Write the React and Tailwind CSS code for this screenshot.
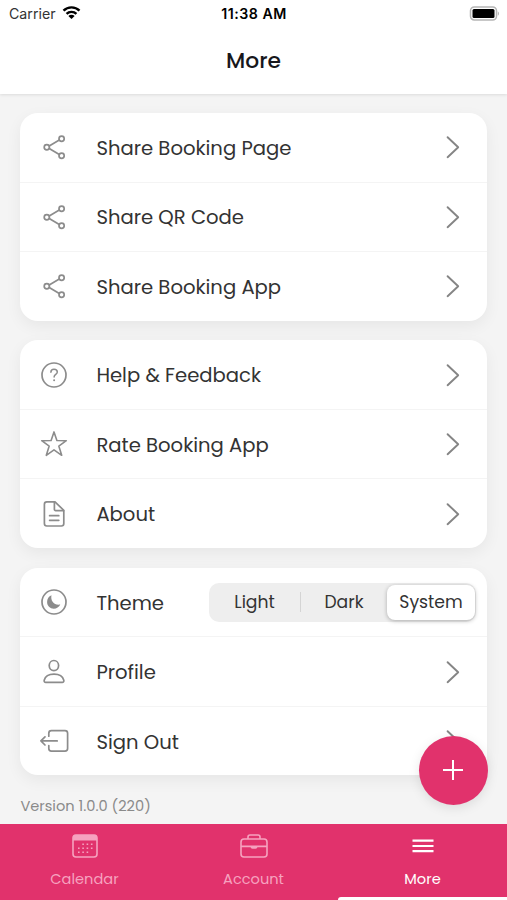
import React, { useState } from "react";
import clsx from "clsx";

const Icon = ({ children, className = "w-7 h-7" }) => (
  <svg
    viewBox="0 0 28 28"
    fill="none"
    stroke="currentColor"
    strokeWidth="1.7"
    strokeLinecap="round"
    strokeLinejoin="round"
    className={className}
  >
    {children}
  </svg>
);

const ShareIcon = () => (
  <Icon>
    <circle cx="21.6" cy="5.8" r="2.6" />
    <circle cx="6.8" cy="14.2" r="2.6" />
    <circle cx="21.6" cy="22.8" r="2.6" />
    <path d="M9.2 12.9L19.3 7.1M9.2 15.5L19.3 21.5" />
  </Icon>
);

const HelpIcon = () => (
  <Icon>
    <circle cx="14" cy="14" r="12" />
    <path
      strokeWidth="1.5"
      d="M10.9 11.2C10.9 9.3 12.2 8.2 14 8.2s3.3 1.1 3.3 2.8c0 2.4-3.2 2.5-3.2 5"
    />
    <circle cx="14.1" cy="19.2" r="1" fill="currentColor" stroke="none" />
  </Icon>
);

const StarIcon = () => (
  <Icon>
    <path
      strokeWidth="1.6"
      d="M14 1.9L16.9 10.5L26.3 10.7L18.8 16.1L21.7 25.3L14 19.9L6.3 25.3L9.2 16.1L1.7 10.7L11.1 10.5Z"
    />
  </Icon>
);

const DocIcon = () => (
  <Icon>
    <path d="M15 1.8H6.8a2.4 2.4 0 0 0-2.4 2.4v19.4A2.4 2.4 0 0 0 6.8 26h14.6a2.4 2.4 0 0 0 2.4-2.4V10.4z" />
    <path d="M14.4 2v7.4a1.2 1.2 0 0 0 1.2 1.2h8M9.6 15.7h9.2M9.6 20.3h9.2" />
  </Icon>
);

const ThemeIcon = () => (
  <Icon>
    <circle cx="14" cy="14" r="12" />
    <path
      fill="currentColor"
      stroke="none"
      d="M11.5 7.2C10.3 12.6 14 17.6 20.3 16.5C19 19.2 16.6 20.7 13.8 20.7C10 20.7 7.1 17.8 7.1 14C7.1 10.8 8.8 8.3 11.5 7.2Z"
    />
  </Icon>
);

const ProfileIcon = () => (
  <Icon>
    <ellipse cx="13.9" cy="7.6" rx="4.7" ry="5.1" />
    <path d="M14 16.2c-5 0-8.8 2.2-9.8 6.1-.3 1.2.4 2 1.5 2h16.6c1.1 0 1.8-.8 1.5-2-1-3.9-4.8-6.1-9.8-6.1z" />
  </Icon>
);

const SignOutIcon = () => (
  <Icon className="w-7 h-7 overflow-visible">
    <path d="M8.8 9.2V6.2a2.6 2.6 0 0 1 2.6-2.6H25a2.6 2.6 0 0 1 2.6 2.6v15.4a2.6 2.6 0 0 1-2.6 2.6H11.4a2.6 2.6 0 0 1-2.6-2.6v-3" />
    <path d="M17.2 13.9H1.2M5 9.8L.9 13.9L5 18" />
  </Icon>
);

const Chevron = () => (
  <svg
    viewBox="0 0 14 24"
    fill="none"
    stroke="currentColor"
    strokeWidth="1.9"
    strokeLinecap="round"
    strokeLinejoin="round"
    className="w-3.5 h-6 text-[#858585]"
  >
    <path d="M1.6 2.2L12.2 12.2L1.6 22.2" />
  </svg>
);

const Row = ({ icon: RowIcon, label, children }) => (
  <div className="flex-1 flex items-center pl-5 border-b border-[#f4f4f4] last:border-b-0 text-[#8c8c8c]">
    <RowIcon />
    <span className="ml-7 pt-px text-[19.6px] leading-7 text-[#333333]">
      {label}
    </span>
    <div className="ml-auto">
      {children || (
        <div className="pr-[27px]">
          <Chevron />
        </div>
      )}
    </div>
  </div>
);

const Card = ({ children }) => (
  <div className="h-[207.6px] flex flex-col bg-white rounded-[18px] shadow-[0_5px_16px_rgba(0,0,0,0.06)]">
    {children}
  </div>
);

const ThemePicker = () => {
  const [theme, setTheme] = useState("System");
  const options = [
    { name: "Light", width: "w-[91px]" },
    { name: "Dark", width: "w-[86px]" },
    { name: "System", width: "w-[88px]" },
  ];

  return (
    <div className="mr-[11px] pr-px h-[39px] flex items-center rounded-[10px] bg-[#eeeeee]">
      {options.map(({ name, width }, i) => (
        <React.Fragment key={name}>
          {i === 1 && <div className="w-px h-5 bg-[#d4d4d4]" />}
          <button
            onClick={() => setTheme(name)}
            className={clsx(
              "h-[35px] pt-px font-['Poppins','Inter',sans-serif] text-[17.2px] text-[#333333]",
              width,
              theme === name &&
                "bg-white rounded-[8px] shadow-[0_1px_4px_rgba(0,0,0,0.28)]"
            )}
          >
            {name}
          </button>
        </React.Fragment>
      ))}
    </div>
  );
};

const StatusBar = () => (
  <div className="h-7 grid grid-cols-3 items-center pl-[9px] pr-[7px] text-black font-['Inter',sans-serif]">
    <div className="flex items-center gap-1.5">
      <span className="w-[47px] whitespace-nowrap text-[14.2px] text-[#333333]">
        Carrier
      </span>
      <svg viewBox="0 0 20 15" className="w-[19px] h-[15px] -mt-0.5">
        <g fill="none" stroke="currentColor" strokeWidth="2.5">
          <path d="M1.6 5.6C6.2.9 13.8.9 18.4 5.6" />
          <path d="M4.8 9C7.6 6.1 12.4 6.1 15.2 9" />
        </g>
        <path
          fill="currentColor"
          d="M10 14.4L6.7 11.1C8.5 9.3 11.5 9.3 13.3 11.1Z"
        />
      </svg>
    </div>
    <span className="-ml-px text-center whitespace-nowrap text-[14.2px] font-semibold tracking-[0.5px]">
      11:38 AM
    </span>
    <svg viewBox="0 0 31 15" className="w-[31px] h-[15px] ml-auto -mt-px">
      <rect
        x="1.5"
        y="1"
        width="26"
        height="13"
        rx="3.8"
        fill="#fff"
        stroke="#b5b5b5"
        strokeWidth="1.5"
      />
      <rect x="3.5" y="3" width="22" height="9" rx="1.5" fill="#000" />
      <path d="M28.8 5.2c1.6.8 1.6 3.8 0 4.6z" fill="#b5b5b5" />
    </svg>
  </div>
);

const CalendarIcon = () => (
  <svg viewBox="0 0 26 24" fill="none" className="w-[26px] h-6">
    <rect
      x="1"
      y="1"
      width="24"
      height="22"
      rx="3"
      stroke="currentColor"
      strokeWidth="1.6"
    />
    <path
      d="M1 6.4V4a3 3 0 0 1 3-3h18a3 3 0 0 1 3 3v2.4z"
      fill="currentColor"
    />
    <g stroke="currentColor" strokeWidth="1.6" strokeDasharray="1.6 2.7">
      <path d="M10.3 10.2h10.4M6 14.2h14.7M6 18.3h10.4" />
    </g>
  </svg>
);

const AccountIcon = () => (
  <svg
    viewBox="0 0 28 26"
    fill="none"
    stroke="currentColor"
    strokeWidth="1.6"
    className="w-7 h-[26px]"
  >
    <rect x="1" y="6" width="26" height="18" rx="3" />
    <path d="M8 6V4a2 2 0 0 1 2-2h8a2 2 0 0 1 2 2v2M1 13.4h26" />
    <path
      d="M10.6 13.4h6.8v.6a1.8 1.8 0 0 1-1.8 1.8h-3.2a1.8 1.8 0 0 1-1.8-1.8z"
      fill="currentColor"
      stroke="none"
    />
  </svg>
);

const MenuIcon = () => (
  <svg
    viewBox="0 0 22 16"
    stroke="currentColor"
    strokeWidth="2.2"
    className="w-[22px] h-4"
  >
    <path d="M.5 2.7h21M.5 8h21M.5 13.2h21" />
  </svg>
);

const tabs = [
  { name: "Calendar", icon: CalendarIcon },
  { name: "Account", icon: AccountIcon },
  { name: "More", icon: MenuIcon },
];

const App = () => {
  return (
    <div className="w-[507px] h-[900px] relative flex flex-col overflow-hidden bg-[#f4f4f4] font-['Poppins','Inter',sans-serif]">
      <header className="h-[94px] shrink-0 bg-white shadow-[0_1px_3px_rgba(0,0,0,0.1)]">
        <StatusBar />
        <h1 className="mt-[17px] text-center text-[21.8px] leading-8 font-medium text-[#17171c]">
          More
        </h1>
      </header>

      <main className="flex-1 pl-[20.4px] pr-[19.5px] pt-[19px]">
        <div className="flex flex-col gap-[19.8px] w-[466.6px]">
          <Card>
            <Row icon={ShareIcon} label="Share Booking Page" />
            <Row icon={ShareIcon} label="Share QR Code" />
            <Row icon={ShareIcon} label="Share Booking App" />
          </Card>
          <Card>
            <Row icon={HelpIcon} label="Help & Feedback" />
            <Row icon={StarIcon} label="Rate Booking App" />
            <Row icon={DocIcon} label="About" />
          </Card>
          <Card>
            <Row icon={ThemeIcon} label="Theme">
              <ThemePicker />
            </Row>
            <Row icon={ProfileIcon} label="Profile" />
            <Row icon={SignOutIcon} label="Sign Out" />
          </Card>
        </div>
        <p className="mt-[18.5px] text-[14.6px] leading-6 text-[#8a8a8a]">
          Version 1.0.0 (220)
        </p>
      </main>

      <button
        aria-label="Add"
        className="absolute right-[19.5px] top-[736px] w-[68.5px] h-[68.5px] rounded-full bg-[#e1326c] text-white flex items-center justify-center shadow-[0_3px_12px_rgba(0,0,0,0.1)]"
      >
        <svg
          viewBox="0 0 20 20"
          stroke="currentColor"
          strokeWidth="2"
          className="w-5 h-5"
        >
          <path d="M10 0v20M0 10h20" />
        </svg>
      </button>

      <nav className="h-[76px] shrink-0 grid grid-cols-3 bg-[#e1326c]">
        {tabs.map(({ name, icon: TabIcon }) => (
          <div
            key={name}
            className={clsx(
              "flex flex-col items-center pt-2",
              name === "More" ? "text-white" : "text-[#f6a2bf]"
            )}
          >
            <div className="h-7 flex items-center">
              <TabIcon />
            </div>
            <span className="mt-[7px] text-[14.6px] leading-6">{name}</span>
            {name === "More" && (
              <div className="mt-auto w-full h-[3px] rounded-tl-sm bg-white" />
            )}
          </div>
        ))}
      </nav>
    </div>
  );
};

export default App;
